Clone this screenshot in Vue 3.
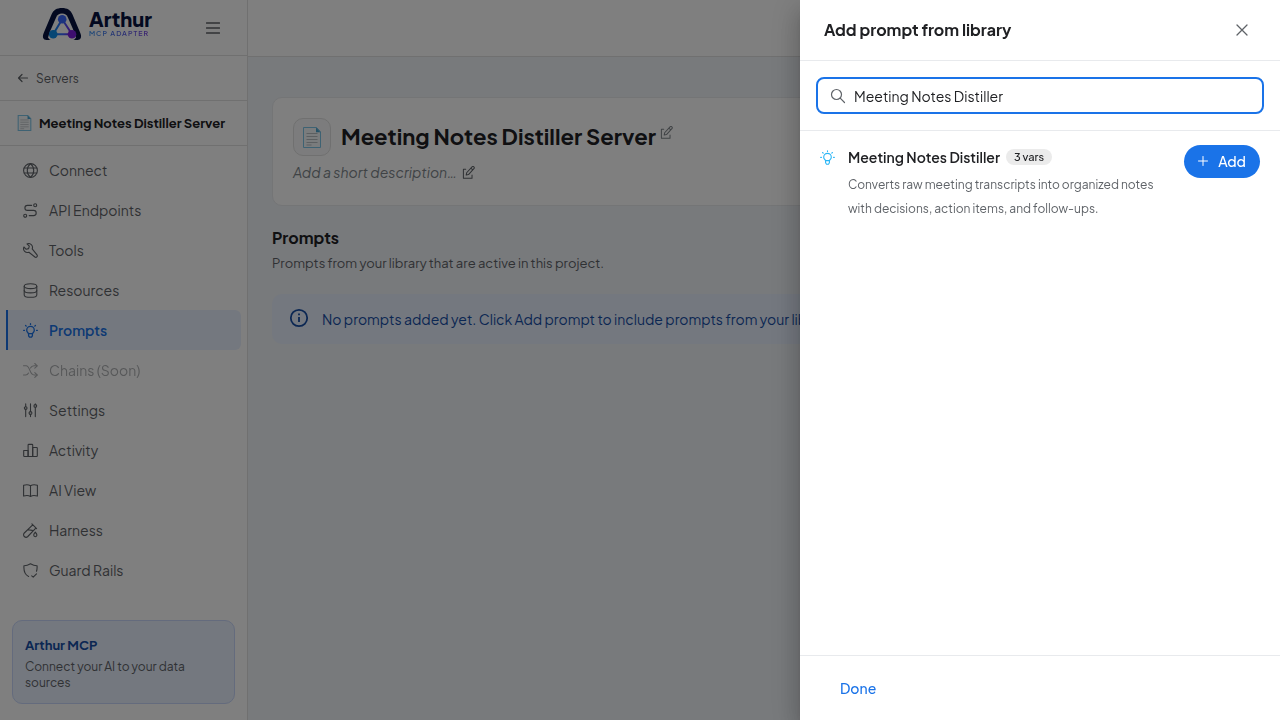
<script setup>
import { ref } from 'vue'

const query = ref('Meeting Notes Distiller')

const bulb = [
  'M5.5 10.6C5.3 9.8 3.7 9.100 3.7 7.200a3.800 3.800 0 0 1 7.600 0c0 1.900-1.600 2.600-1.800 3.400z',
  'M5.600 10.600v2.200l.9 1.400h2l.9-1.400v-2.200',
  'M7.500.7v.7M.7 7.400h.7M13.600 7.400h.7M2.600 2.500l.6.6M12.400 2.500l-.6.6'
]

const nav = [
  { label: 'Connect', paths: ['M7.5.6a6.9 6.9 0 1 0 0 13.8a6.9 6.9 0 0 0 0-13.8z', 'M7.5.6C3.2 4.5 3.2 10.5 7.5 14.4C11.8 10.500 11.800 4.500 7.500.6z', 'M1.2 5h12.6M1.2 10h12.6'] },
  { label: 'API Endpoints', paths: ['M12.2.8a1.500 1.500 0 1 0 0 3a1.500 1.500 0 0 0 0-3z', 'M2.200 11.200a1.500 1.500 0 1 0 0 3a1.500 1.500 0 0 0 0-3z', 'M8.600 2.400H4.400a2.500 2.500 0 0 0 0 5h6.200a2.600 2.600 0 0 1 0 5.200H6.200'] },
  { label: 'Tools', paths: ['M4 .9a3.9 3.9 0 0 1 5.200 5l4.800 6a1.500 1.500 0 0 1-2.100 2.100L5.900 9.200a3.900 3.900 0 0 1-5-5.200L3.200 6.300 5.600 5.600 6.300 3.200z'] },
  { label: 'Resources', paths: ['M1.2 3.2C1.2 1.7 4 .8 7.5.8s6.3.9 6.3 2.4S11 5.6 7.5 5.6s-6.3-.9-6.3-2.4z', 'M1.2 3.2v8.7c0 1.4 2.8 2.4 6.3 2.4s6.3-1 6.3-2.4V3.2', 'M1.2 7.5c0 1.4 2.8 2.4 6.3 2.4s6.3-1 6.3-2.4'] },
  { label: 'Prompts', active: true, paths: bulb },
  { label: 'Chains (Soon)', disabled: true, paths: ['M.5 2.8h2.600c4.200 0 3.200 9.200 8 9.200h3M.5 12h2.200c1.500 0 2.200-.8 2.800-2M7.500 5c.7-1.400 1.700-2.200 3.500-2.200h3', 'M11.800.5l2.400 2.300-2.400 2.300M11.800 9.700l2.400 2.300-2.400 2.300'] },
  { label: 'Settings', paths: ['M2.7.9v2.8M2.7 6.400v7.200M7.500.9v7.700M7.500 11.400v2.200M12.300.9v.7M12.300 4.300v9.300', 'M2.700 3.700a1.350 1.350 0 1 0 0 2.700a1.350 1.350 0 0 0 0-2.700zM7.500 8.600a1.400 1.400 0 1 0 0 2.800a1.400 1.400 0 0 0 0-2.800zM12.300 1.600a1.350 1.350 0 1 0 0 2.700a1.350 1.350 0 0 0 0-2.700z'] },
  { label: 'Activity', paths: ['M.7 7.500h4.400v6H1.400a.7.7 0 0 1-.7-.7z', 'M5.100 13.500V2.100a.7.7 0 0 1 .7-.7h3.200a.7.7 0 0 1 .7.7v11.400z', 'M9.700 4.500h3.900a.7.7 0 0 1 .7.7v7.600a.7.7 0 0 1-.7.7H9.700z'] },
  { label: 'AI View', paths: ['M7.5 2.700C5.600 1.500 3 1.500.6 2.200v10.900c2.400-.8 5-.8 6.900.3c1.900-1.100 4.500-1.100 6.900-.3V2.200C12 1.500 9.400 1.500 7.500 2.700zM7.500 2.700v10.700'] },
  { label: 'Harness', paths: ['M8.900.9l4.700 4.700M9.700 1.800L1.300 10a2.400 2.400 0 0 0 3.500 3.500l8-8.400M4.700 6.800l4.600.6', 'M12.300 9.200s-1.600 1.700-1.600 2.900a1.600 1.600 0 0 0 3.200 0c0-1.200-1.600-2.900-1.600-2.900z'] },
  { label: 'Guard Rails', paths: ['M5.600 13.500C2.200 12 .9 8.800.9 4.600V2.800C3.500 2.900 5.500 2 7.500.8c2 1.200 4 2.100 6.600 2v1.800c0 1.400-.2 2.600-.6 3.600', 'M8.700 12.800l1.500 1.300 3.300-3.300'] }
]
</script>

<template>
  <div class="app">
    <aside class="sidebar">
      <div class="brand">
        <div class="logo">
          <svg class="mark" viewBox="0 0 38 32" aria-hidden="true">
            <defs>
              <linearGradient id="edge" gradientUnits="userSpaceOnUse" x1="10" y1="0" x2="29" y2="0">
                <stop offset="0" stop-color="#0a8ce8" />
                <stop offset=".5" stop-color="#3d68ff" />
                <stop offset="1" stop-color="#7a1ce0" />
              </linearGradient>
            </defs>
            <path fill="#061340" d="M19 0C24.200 0 27.600 2 29.500 6.500L37.300 25C39 29 37.800 32 34.500 32H3.500C.2 32-1 29 .7 25L8.500 6.500C10.400 2 13.800 0 19 0z" />
            <path fill="#fff" d="M19 5.500C21.900 5.500 23.700 6.800 24.700 9L31 23.500L33 29.500C32 31 31 32 29 32.500H9C7 32 6 31 5 29.500L7 23.500L13.300 9C14.300 6.800 16.100 5.500 19 5.500z" />
            <path d="M19.200 11.300L10.200 26.300H29z" fill="none" stroke="url(#edge)" stroke-width="2" />
            <circle cx="19.200" cy="11.300" r="4.300" fill="#3968ff" />
            <circle cx="10.200" cy="26.300" r="4.300" fill="#0a8ce8" />
            <circle cx="29" cy="26.300" r="4.300" fill="#7a1ce0" />
          </svg>
          <div class="wordmark">
            <span class="name">Arthur</span>
            <span class="sub">MCP ADAPTER</span>
          </div>
        </div>
        <button class="plain menu" type="button" aria-label="Collapse menu">
          <svg width="14" height="12" viewBox="0 0 14 12" aria-hidden="true"><path d="M.5 1h13M.5 6h13M.5 11h13" fill="none" stroke="currentColor" stroke-width="1.300" stroke-linecap="round" /></svg>
        </button>
      </div>
      <a class="back" href="#servers">
        <svg width="12" height="12" viewBox="0 0 12 12" aria-hidden="true"><path d="M5 2.500L1.500 6 5 9.500M1.500 6h9" fill="none" stroke="currentColor" stroke-width="1.200" stroke-linecap="round" stroke-linejoin="round" /></svg>
        Servers
      </a>
      <div class="project">
        <svg width="15" height="16" viewBox="0 0 18 21" aria-hidden="true"><path d="M.7.7h12.600l4 4.200v15.400H.7z" fill="#f4f8fa" stroke="#7cc4e6" stroke-width="1.400" /><path d="M13 .7v4.500h4.300z" fill="#4aa5d0" /><path d="M3.500 6.500h11M3.500 9.500h11M3.500 12.500h11M3.500 15.500h11M3.500 18h5" stroke="#b9bec2" /></svg>
        <span>Meeting Notes Distiller Server</span>
      </div>
      <nav>
        <a v-for="item in nav" :key="item.label" href="#nav" :class="{ active: item.active, disabled: item.disabled }">
          <svg width="15" height="15" viewBox="0 0 15 15" class="line" aria-hidden="true"><path v-for="p in item.paths" :key="p" :d="p" /></svg>
          <span>{{ item.label }}</span>
        </a>
      </nav>
      <div class="promo">
        <strong>Arthur MCP</strong>
        <p>Connect your AI to your data sources</p>
      </div>
    </aside>

    <div class="page">
      <header class="topbar"></header>
      <main>
        <section class="card">
          <div class="title-row">
            <div class="tile">
              <svg width="18" height="21" viewBox="0 0 18 21" aria-hidden="true"><path d="M.5.5h13l4 4.200v15.800H.5z" fill="#f4f8fa" stroke="#7cc4e6" /><path d="M13 .5v4.700h4.500z" fill="#4aa5d0" /><path d="M3.500 6.500h11M3.500 9.500h11M3.500 12.500h11M3.500 15.500h11M3.500 18h5" stroke="#b9bec2" /></svg>
            </div>
            <h1>Meeting Notes Distiller Server</h1>
            <button class="plain edit" type="button" aria-label="Edit name">
              <svg width="13" height="13" viewBox="0 0 14 14" class="line" aria-hidden="true"><path d="M4 3.500H1.500v9.800h9.300v-3.500M4.500 9.800l.5-2.500L10.800.9a1.400 1.400 0 0 1 2 2L7 9.200zM9.600 2.200l2 2" /></svg>
            </button>
          </div>
          <div class="desc-row">
            <em>Add a short description…</em>
            <button class="plain" type="button" aria-label="Edit description">
              <svg width="13" height="13" viewBox="0 0 14 14" class="line" aria-hidden="true"><path d="M4 3.500H1.500v9.800h9.300v-3.500M4.500 9.800l.5-2.500L10.800.9a1.400 1.400 0 0 1 2 2L7 9.200zM9.600 2.200l2 2" /></svg>
            </button>
          </div>
        </section>
        <h2>Prompts</h2>
        <p class="lead">Prompts from your library that are active in this project.</p>
        <div class="notice">
          <svg width="22" height="22" viewBox="0 0 22 22" aria-hidden="true"><circle cx="11" cy="11" r="8.200" fill="none" stroke="currentColor" stroke-width="1.800" /><path d="M11 10v5M11 6.500v1.800" stroke="currentColor" stroke-width="1.800" /></svg>
          <span>No prompts added yet. Click Add prompt to include prompts from your library.</span>
        </div>
      </main>
    </div>

    <div class="backdrop"></div>

    <section class="drawer" role="dialog" aria-labelledby="drawer-title">
      <header class="drawer-head">
        <h2 id="drawer-title">Add prompt from library</h2>
        <button class="plain close" type="button" aria-label="Close">
          <svg width="12" height="12" viewBox="0 0 12 12" aria-hidden="true"><path d="M1 1l10 10M11 1L1 11" fill="none" stroke="currentColor" stroke-width="1.300" stroke-linecap="round" /></svg>
        </button>
      </header>
      <div class="search-wrap">
        <label class="search">
          <svg width="16" height="16" viewBox="0 0 16 16" aria-hidden="true"><path d="M6.500 1.500a5 5 0 1 0 0 10a5 5 0 0 0 0-10zM10.200 10.200l4.300 4.300" fill="none" stroke="currentColor" stroke-width="1.200" stroke-linecap="round" /></svg>
          <input v-model="query" type="text" aria-label="Search prompts" />
        </label>
      </div>
      <ul class="results">
        <li>
          <svg width="15" height="15" viewBox="0 0 15 15" class="line result-icon" aria-hidden="true"><path v-for="p in bulb" :key="p" :d="p" /></svg>
          <div class="info">
            <div class="info-title"><strong>Meeting Notes Distiller</strong><span class="chip">3 vars</span></div>
            <p>Converts raw meeting transcripts into organized notes with decisions, action items, and follow-ups.</p>
          </div>
          <button class="add" type="button">
            <svg width="10" height="10" viewBox="0 0 10 10" aria-hidden="true"><path d="M5 .5v9M.5 5h9" fill="none" stroke="currentColor" stroke-width="1" stroke-linecap="round" /></svg>
            Add
          </button>
        </li>
      </ul>
      <footer><button class="done" type="button">Done</button></footer>
    </section>
  </div>
</template>

<style>
body { overflow: hidden; }
</style>

<style scoped>
* { box-sizing: border-box; }
.app {
  display: flex;
  height: 100vh;
  background: #f0f4f8;
  color: #202124;
  font-family: "Plus Jakarta Sans", Inter, "Liberation Sans", sans-serif;
  font-size: 14px;
}
h1, h2, p, ul { margin: 0; padding: 0; }
button, input { font: inherit; }
a { color: inherit; text-decoration: none; }
svg { display: block; flex: none; }
.line { fill: none; stroke: currentColor; stroke-width: 1.1; stroke-linecap: round; stroke-linejoin: round; }
.plain { display: flex; padding: 0; border: 0; background: none; color: #5f6368; }

.sidebar { display: flex; flex-direction: column; flex: none; width: 248px; background: #fff; border-right: 1px solid #e0e0e0; }
.brand { display: flex; align-items: center; justify-content: space-between; height: 56px; padding: 0 27px 0 43px; border-bottom: 1px solid #e0e0e0; }
.logo { display: flex; align-self: flex-start; gap: 8px; padding-top: 8px; }
.mark { width: 38px; height: 32px; overflow: visible; }
.wordmark { display: flex; flex-direction: column; }
.name { color: #061340; font-size: 20px; font-weight: 800; line-height: 22px; }
.sub { font-size: 7px; font-weight: 600; line-height: 8px; letter-spacing: 1px; background: linear-gradient(90deg, #2f8ef0, #7a3ce0); background-clip: text; color: transparent; }
.back { display: flex; align-items: center; gap: 7px; height: 45px; padding-left: 17px; border-bottom: 1px solid #e0e0e0; color: #5f6368; font-size: 12px; }
.project { display: flex; align-items: center; gap: 7px; height: 45px; padding-left: 17px; border-bottom: 1px solid #e0e0e0; font-size: 13px; font-weight: 700; white-space: nowrap; }
nav { padding: 4px 6px; }
nav a { display: flex; align-items: center; gap: 11px; height: 40px; padding: 1px 0 0 15px; border-left: 2px solid transparent; border-radius: 0 6px 6px 0; color: #5f6368; }
nav span { padding-bottom: 2px; }
nav .active { border-left-color: #1a73e8; background: #e8f0fe; color: #1a73e8; font-weight: 600; }
nav .active .line { stroke-width: 1.3; }
nav .disabled { opacity: .5; }
.promo { margin: auto 12px 16px; padding: 15px 12px 12px; border: 1px solid #c9d7fa; border-radius: 10px; background: #e8f0fe; }
.promo strong { display: block; color: #174ea6; font-size: 13px; line-height: 18px; }
.promo p { margin-top: 5px; color: #5f6368; font-size: 12px; line-height: 16px; }

.page { flex: 1; min-width: 0; }
.topbar { height: 57px; border-bottom: 1px solid #e0e0e0; background: #fff; }
main { padding: 40px 24px; }
.card { padding: 20px 20px 21px; border: 1px solid #e8eaed; border-radius: 10px; background: #fff; }
.title-row { display: flex; align-items: center; gap: 10px; }
.tile { display: flex; align-items: center; justify-content: center; width: 38px; height: 38px; border: 1px solid #e0e0e0; border-radius: 10px; background: #f8f9fa; }
h1 { padding-bottom: 2px; font-size: 22px; font-weight: 700; line-height: 32px; white-space: nowrap; }
.edit { align-self: flex-start; margin: 8px 0 0 -6px; color: #80868b; }
.desc-row { display: flex; align-items: center; gap: 5px; margin-top: 5px; padding-bottom: 1px; line-height: 22px; color: #80868b; }
main h2 { margin-top: 20px; font-size: 16px; font-weight: 700; line-height: 24px; }
.lead { margin-top: 2px; color: #5f6368; font-size: 13px; line-height: 22px; }
.notice { display: flex; align-items: flex-start; gap: 12px; margin-top: 20px; padding: 13px 16px; border-radius: 10px; background: #e8f0fe; color: #174ea6; line-height: 24px; white-space: nowrap; overflow: hidden; }

.backdrop { position: fixed; inset: 0; background: rgba(0, 0, 0, .5); }
.drawer { position: fixed; top: 0; right: 0; bottom: 0; display: flex; flex-direction: column; width: 480px; max-width: 100%; background: #fff; box-shadow: 0 8px 10px -5px rgba(0, 0, 0, .2), 0 16px 24px 2px rgba(0, 0, 0, .14), 0 6px 30px 5px rgba(0, 0, 0, .12); }
.drawer-head { display: flex; align-items: center; justify-content: space-between; height: 61px; padding: 0 32px 0 24px; border-bottom: 1px solid #e8eaed; }
.drawer-head h2 { font-size: 16px; font-weight: 700; line-height: 24px; }
.search-wrap { padding: 16px; border-bottom: 1px solid #e8eaed; }
.search { display: flex; align-items: center; gap: 8px; height: 37px; padding: 0 12px; border: 2px solid #1a73e8; border-radius: 8px; color: #5f6368; }
.search input { flex: 1; min-width: 0; padding: 0; border: 0; outline: 0; background: none; color: #202124; }
.results { flex: 1; list-style: none; }
.results li { display: flex; align-items: flex-start; padding: 14px 20px; }
.result-icon { margin-top: 5px; color: #29b6f6; }
.info { flex: 1; min-width: 0; padding: 0 16px 0 13px; }
.info-title { display: flex; align-items: center; gap: 6px; line-height: 24px; white-space: nowrap; }
.info-title strong { font-weight: 600; }
.chip { padding: 0 8px; border-radius: 8px; background: #ebebeb; font-size: 11px; font-weight: 500; line-height: 16px; }
.info p { margin-top: 4px; color: #5f6368; font-size: 12px; line-height: 24px; }
.add { display: flex; align-items: center; gap: 10px; height: 33px; padding: 0 14px 2px; border: 0; border-radius: 17px; background: #1a73e8; color: #fff; font-weight: 500; }
footer { height: 65px; padding: 16px 24px; border-top: 1px solid #e8eaed; }
.done { height: 33px; padding: 0 16px 2px; border: 0; background: none; color: #1a73e8; font-weight: 500; }
</style>
